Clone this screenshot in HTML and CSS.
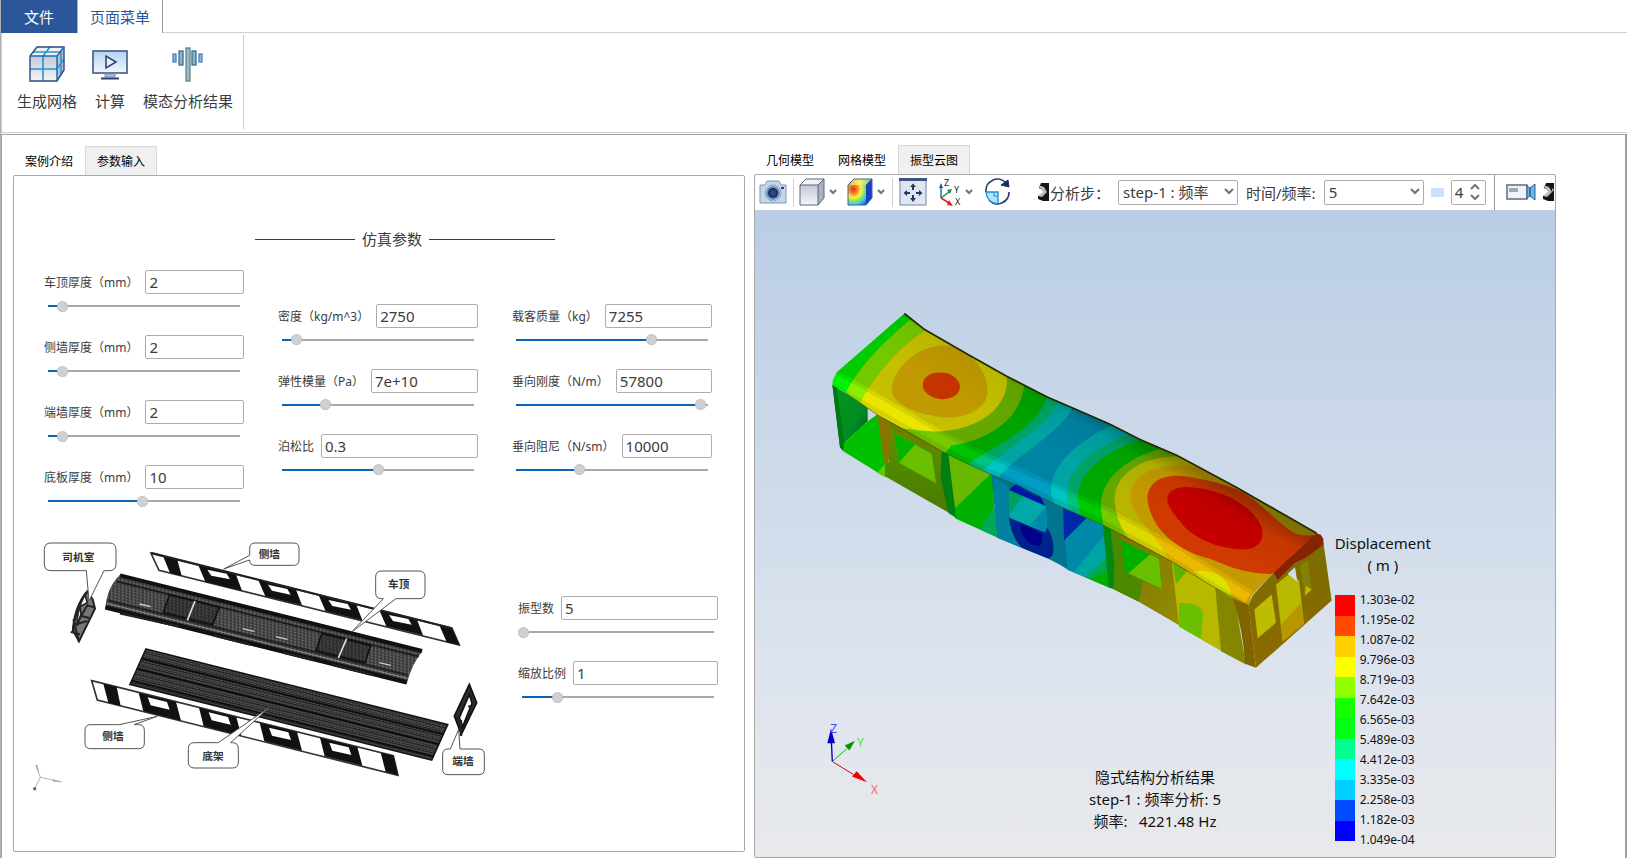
FILE: index.html
```
<!DOCTYPE html>
<html lang="zh-CN">
<head>
    <meta charset="UTF-8">
    <meta name="viewport" content="width=device-width, initial-scale=1.0">
    <title>模态分析</title>
    <link rel="stylesheet" href="styles.css">
</head>
<body>
    <header class="ribbon">
        <nav class="ribbon-tabs">
            <button type="button" class="file-tab">文件</button>
            <button type="button" class="menu-tab">页面菜单</button>
        </nav>
        <div class="ribbon-body">
            <div class="ribbon-group">
                <button type="button" class="ribbon-button">
                    <svg width="38" height="38" viewBox="0 0 38 38">
                        <defs>
                            <linearGradient id="face" x1="0" y1="0" x2="0" y2="1"><stop offset="0" stop-color="#c3c9d6"/><stop offset="1" stop-color="#f4f5f7"/></linearGradient>
                        </defs>
                        <path d="M2 11L9 2H36L29 11Z" fill="#eef2f7"/>
                        <path d="M2 11H29V36H2Z" fill="url(#face)"/>
                        <path d="M29 11L36 2V25L29 36Z" fill="#b5bfd0"/>
                        <path d="M15 36V11L22 2M2 24H29L36 14M5 7H33V30" fill="none" stroke="#2a93d3" stroke-width="1.6"/>
                        <path d="M2 11L9 2H36V25L29 36H2Z" fill="none" stroke="#2b4a80" stroke-width="1.4"/>
                        <path d="M2 11H29V36M29 11L36 2" fill="none" stroke="#1c6eb0" stroke-width="1.5"/>
                    </svg>
                    <span>生成网格</span>
                </button>
                <button type="button" class="ribbon-button">
                    <svg width="38" height="38" viewBox="0 0 38 38">
                        <defs>
                            <linearGradient id="screen" x1="0" y1="0" x2="0" y2="1"><stop offset="0" stop-color="#b4d3f3"/><stop offset="1" stop-color="#f1f6fb"/></linearGradient>
                        </defs>
                        <rect x="2" y="6" width="34" height="22" fill="url(#screen)" stroke="#3f5a86" stroke-width="1.6"/>
                        <path d="M15 11V23L25 17Z" fill="#e6effa" stroke="#27406f" stroke-width="1.5"/>
                        <path d="M14 29H24V32H14Z" fill="#b8c2d0" stroke="#7c8ba3"/>
                        <path d="M10 33.500H28" stroke="#27406f" stroke-width="2"/>
                    </svg>
                    <span>计算</span>
                </button>
                <button type="button" class="ribbon-button">
                    <svg width="38" height="38" viewBox="0 0 38 38">
                        <g stroke-width="1.300">
                            <rect x="4" y="9" width="3" height="8" fill="#8fb9dd" stroke="#4d83b5"/>
                            <rect x="10" y="6" width="4" height="14" fill="#8eb6c8" stroke="#3c6f92"/>
                            <rect x="17" y="3" width="4" height="33" fill="#9dbcc0" stroke="#5b8791"/>
                            <rect x="23" y="6" width="4" height="14" fill="#8eb6c8" stroke="#3c6f92"/>
                            <rect x="30" y="9" width="3" height="8" fill="#8fb9dd" stroke="#4d83b5"/>
                        </g>
                    </svg>
                    <span>模态分析结果</span>
                </button>
            </div>
        </div>
    </header>

    <main class="workspace">
        <section class="pane input-pane">
            <nav class="tabs">
                <button type="button" class="tab">案例介绍</button>
                <button type="button" class="tab active">参数输入</button>
            </nav>
            <div class="panel form-panel">
                <h1 class="form-title">仿真参数</h1>
                <div class="field-columns">
                    <div class="field-column">
                        <div class="field">
                            <div class="field-row"><label for="roof">车顶厚度（mm）</label><input class="text-input" id="roof" type="text" value="2"></div>
                            <input class="slider" type="range" aria-label="车顶厚度" value="7" style="--fill: 0.07">
                        </div>
                        <div class="field">
                            <div class="field-row"><label for="side">侧墙厚度（mm）</label><input class="text-input" id="side" type="text" value="2"></div>
                            <input class="slider" type="range" aria-label="侧墙厚度" value="7" style="--fill: 0.07">
                        </div>
                        <div class="field">
                            <div class="field-row"><label for="end">端墙厚度（mm）</label><input class="text-input" id="end" type="text" value="2"></div>
                            <input class="slider" type="range" aria-label="端墙厚度" value="7" style="--fill: 0.07">
                        </div>
                        <div class="field">
                            <div class="field-row"><label for="floor">底板厚度（mm）</label><input class="text-input" id="floor" type="text" value="10"></div>
                            <input class="slider" type="range" aria-label="底板厚度" value="49" style="--fill: 0.49">
                        </div>
                    </div>
                    <div class="field-column">
                        <div class="field">
                            <div class="field-row"><label for="density">密度（kg/m^3）</label><input class="text-input" id="density" type="text" value="2750"></div>
                            <input class="slider" type="range" aria-label="密度" value="7" style="--fill: 0.07">
                        </div>
                        <div class="field">
                            <div class="field-row"><label for="modulus">弹性模量（Pa）</label><input class="text-input" id="modulus" type="text" value="7e+10"></div>
                            <input class="slider" type="range" aria-label="弹性模量" value="22" style="--fill: 0.22">
                        </div>
                        <div class="field">
                            <div class="field-row"><label for="poisson">泊松比</label><input class="text-input" id="poisson" type="text" value="0.3"></div>
                            <input class="slider" type="range" aria-label="泊松比" value="50" style="--fill: 0.5">
                        </div>
                    </div>
                    <div class="field-column">
                        <div class="field">
                            <div class="field-row"><label for="mass">载客质量（kg）</label><input class="text-input" id="mass" type="text" value="7255"></div>
                            <input class="slider" type="range" aria-label="载客质量" value="71" style="--fill: 0.71">
                        </div>
                        <div class="field">
                            <div class="field-row"><label for="stiffness">垂向刚度（N/m）</label><input class="text-input" id="stiffness" type="text" value="57800"></div>
                            <input class="slider" type="range" aria-label="垂向刚度" value="97" style="--fill: 0.97">
                        </div>
                        <div class="field">
                            <div class="field-row"><label for="damping">垂向阻尼（N/sm）</label><input class="text-input" id="damping" type="text" value="10000"></div>
                            <input class="slider" type="range" aria-label="垂向阻尼" value="33" style="--fill: 0.33">
                        </div>
                    </div>
                </div>

                <div class="lower">
                    <!-- exploded view of the car body -->
                    <svg class="exploded" viewBox="90 50 1380 780">
                        <defs>
                            <pattern id="mesh" width="11" height="9" patternUnits="userSpaceOnUse" patternTransform="skewY(14)">
                                <rect width="11" height="9" fill="#343434"/>
                                <path d="M2 2H9M2 6H6" stroke="#8f8f8f" stroke-width="2"/>
                            </pattern>
                            <pattern id="ribs" width="40" height="14" patternUnits="userSpaceOnUse" patternTransform="skewY(14)">
                                <rect width="40" height="14" fill="#1c1c1c"/>
                                <path d="M0 3H40" stroke="#8c8c8c" stroke-width="2"/>
                                <path d="M0 9H40" stroke="#6c6c6c" stroke-width="3" stroke-dasharray="8 2"/>
                            </pattern>
                        </defs>

                        <!-- upper side wall -->
                        <path d="M453 102L1356 327L1378 377L477 153Z" fill="#fff" stroke="#333" stroke-width="5"/>
                        <g fill="#111">
                            <path d="M490 112L532 122L545 169L510 161Z"/>
                            <path d="M595 138L708 166L726 214L616 187ZM622 151L634 169L690 180L680 163Z" fill-rule="evenodd"/>
                            <path d="M775 183L888 211L906 258L796 231ZM804 196L816 214L872 226L862 209Z" fill-rule="evenodd"/>
                            <path d="M956 228L1069 256L1087 303L977 276ZM985 242L997 260L1053 271L1043 254Z" fill-rule="evenodd"/>
                            <path d="M1138 273L1251 301L1269 348L1159 321ZM1167 287L1179 305L1235 316L1225 299Z" fill-rule="evenodd"/>
                            <path d="M1318 318L1356 327L1378 377L1340 368Z"/>
                        </g>
                        <path d="M453 100L1356 327" fill="none" stroke="#222" stroke-width="6"/>

                        <!-- roof -->
                        <path d="M360 166L1268 394Q1235 435 1220 493L750 378L316 268Q320 205 360 166Z" fill="url(#mesh)"/>
                        <path d="M360 168L1266 395" stroke="#111" stroke-width="12" fill="none"/>
                        <path d="M350 186L1256 412" stroke="#1b1b1b" stroke-width="5" fill="none"/>
                        <path d="M316 264L1220 489" stroke="#111" stroke-width="13" fill="none"/>
                        <path d="M322 243L1225 468" stroke="#222" stroke-width="6" fill="none"/>
                        <path d="M320 252L1222 477" stroke="#aaa" stroke-width="2" fill="none"/>
                        <path d="M360 282L540 322M640 348L750 376M850 400L940 422M1000 437L1120 467" stroke="#222" stroke-width="7" fill="none"/>
                        <g fill="#1d1d1d" fill-opacity=".45" stroke="#111" stroke-width="5">
                            <path d="M508 226L658 263L638 316L490 280Z"/>
                            <path d="M966 342L1112 378L1095 430L948 394Z"/>
                        </g>
                        <path d="M585 245L562 303M1040 358L1015 416" stroke="#ddd" stroke-width="5"/>
                        <path d="M418 254L452 262M728 328L762 336M828 352L862 360M1138 430L1172 438" stroke="#ccc" stroke-width="4"/>

                        <!-- floor frame -->
                        <path d="M438 389L1343 616L1295 722L390 495Z" fill="url(#ribs)" stroke="#161616" stroke-width="5"/>
                        <path d="M425 418L1330 645M412 448L1317 675M396 484L1301 711" stroke="#0c0c0c" stroke-width="5"/>

                        <!-- lower side wall -->
                        <path d="M275 484L1180 709L1194 768L292 542Z" fill="#fff" stroke="#333" stroke-width="5"/>
                        <g fill="#111">
                            <path d="M310 493L350 503L362 560L325 550Z"/>
                            <path d="M416 520L528 548L543 604L430 576ZM443 534L452 558L509 571L501 548Z" fill-rule="evenodd"/>
                            <path d="M597 565L709 593L724 649L611 621ZM626 579L635 603L692 616L684 593Z" fill-rule="evenodd"/>
                            <path d="M779 610L891 638L906 694L793 666ZM807 625L816 649L873 662L865 639Z" fill-rule="evenodd"/>
                            <path d="M960 655L1072 683L1087 739L974 711ZM988 670L997 694L1054 707L1046 684Z" fill-rule="evenodd"/>
                            <path d="M1142 700L1180 709L1194 768L1157 757Z"/>
                        </g>

                        <!-- cab and end wall -->
                        <path d="M262 216Q225 260 220 335L237 366L285 268L278 240Z" fill="#777" stroke="#222" stroke-width="6"/>
                        <path d="M255 225Q228 275 232 320L243 285L240 262L262 250Z" fill="#eee" stroke="#222" stroke-width="5"/>
                        <path d="M262 216Q222 262 218 340M285 265L262 258L238 300M228 315L262 305M212 338L240 345M245 290L268 296M237 368L220 300" fill="none" stroke="#222" stroke-width="6"/>
                        <path d="M1408 495L1430 550L1384 645L1363 590ZM1408 525L1378 595L1388 622L1416 552Z" fill="#2b2b2b" fill-rule="evenodd" stroke="#111" stroke-width="5"/>
                        <path d="M1363 590L1383 605V650M1405 560L1416 565" stroke="#222" stroke-width="7" fill="none"/>

                        <!-- callouts -->
                        <g fill="#fff" stroke="#555" stroke-width="3" stroke-linejoin="round">
                            <path d="M153 71H328Q348 71 348 91V134Q348 154 328 154H312L267 245L259 154H153Q133 154 133 134V91Q133 71 153 71Z"/>
                            <path d="M765 71H881Q897 71 897 87V122Q897 138 881 138H765Q749 138 749 122L671 149L749 108V87Q749 71 765 71Z"/>
                            <path d="M1145 155H1257Q1275 155 1275 173V220Q1275 238 1257 238H1188L1055 338L1150 238H1145Q1127 238 1127 220V173Q1127 155 1145 155Z"/>
                            <path d="M272 616H358L472 591L402 616H416Q433 616 433 633V671Q433 688 416 688H272Q255 688 255 671V633Q255 616 272 616Z"/>
                            <path d="M583 670H655L808 564L692 670H697Q715 670 715 688V728Q715 746 697 746H583Q565 746 565 728V688Q565 670 583 670Z"/>
                            <path d="M1344 689H1351L1376 630L1380 689H1437Q1453 689 1453 705V750Q1453 766 1437 766H1344Q1328 766 1328 750V705Q1328 689 1344 689Z"/>
                        </g>
                        <g class="callout-text">
                            <text x="235" y="126">司机室</text>
                            <text x="808" y="117">侧墙</text>
                            <text x="1196" y="207">车顶</text>
                            <text x="339" y="663">侧墙</text>
                            <text x="639" y="722">底架</text>
                            <text x="1389" y="738">端墙</text>
                        </g>

                        <path d="M121 774L108 736M121 774L185 788M121 774L104 808" stroke="#888" stroke-width="2" fill="none"/>
                        <path d="M106 738L112 736L117 754L112 754ZM158 779L185 787L160 787Z" fill="#aaa"/>
                        <circle cx="104" cy="808" r="5" fill="#666"/>
                    </svg>
                    <div class="field-column">
                        <div class="field">
                            <div class="field-row"><label for="modes">振型数</label><input class="text-input" id="modes" type="text" value="5"></div>
                            <input class="slider" type="range" aria-label="振型数" value="0" style="--fill: 0">
                        </div>
                        <div class="field">
                            <div class="field-row"><label for="scale">缩放比例</label><input class="text-input" id="scale" type="text" value="1"></div>
                            <input class="slider" type="range" aria-label="缩放比例" value="18" style="--fill: 0.18">
                        </div>
                    </div>
                </div>
            </div>
        </section>

        <section class="pane result-pane">
            <nav class="tabs">
                <button type="button" class="tab">几何模型</button>
                <button type="button" class="tab">网格模型</button>
                <button type="button" class="tab active">振型云图</button>
            </nav>
            <div class="panel view-panel">
                <div class="toolbar">
                    <div class="tool-group camera-group">
                        <button type="button" class="tool" aria-label="截图">
                            <svg width="28" height="24" viewBox="0 0 28 24">
                                <path d="M1 5H6L8 1H20L22 5H27V23H1Z" fill="#c5d6ea" stroke="#7d97ba"/>
                                <circle cx="14" cy="13" r="8" fill="#e3edf7" stroke="#8aa2c0"/>
                                <circle cx="14" cy="13" r="6" fill="#17305e" stroke="#6c8bb5" stroke-width="2"/>
                                <circle cx="14" cy="13" r="3" fill="#274a80"/>
                                <rect x="22" y="7" width="3" height="2" fill="#27406f"/>
                            </svg>
                        </button>
                    </div>
                    <div class="tool-group shape-group">
                        <button type="button" class="tool drop" aria-label="显示模式">
                            <svg width="26" height="28" viewBox="0 0 26 28">
                                <path d="M1 7L7 1H25L19 7Z" fill="#f3f4f6"/><path d="M1 7H19V27H1Z" fill="url(#face)"/><path d="M19 7L25 1V20L19 27Z" fill="#aab1bf"/>
                                <path d="M1 7L7 1H25V20L19 27H1ZM1 7H19V27M19 7L25 1" fill="none" stroke="#59657d"/>
                            </svg>
                            <svg class="chevron" width="8" height="6" viewBox="0 0 8 6"><path d="M1 1L4 4L7 1"/></svg>
                        </button>
                        <button type="button" class="tool drop" aria-label="云图显示">
                            <svg width="26" height="28" viewBox="0 0 26 28">
                                <defs>
                                    <radialGradient id="rainbow" cx=".3" cy=".2" r=".95"><stop offset="0" stop-color="#e2331a"/><stop offset=".25" stop-color="#f58a20"/><stop offset=".45" stop-color="#fff04a"/><stop offset=".65" stop-color="#8de45a"/><stop offset=".82" stop-color="#3cc8f0"/><stop offset="1" stop-color="#1f6fe0"/></radialGradient>
                                    <linearGradient id="rainbow-top"><stop offset="0" stop-color="#f7a45a"/><stop offset=".5" stop-color="#f4f56a"/><stop offset="1" stop-color="#5fc9a0"/></linearGradient>
                                </defs>
                                <path d="M1 7L7 1H25L19 7Z" fill="url(#rainbow-top)"/><path d="M1 7H19V27H1Z" fill="url(#rainbow)"/><path d="M19 7L25 1V20L19 27Z" fill="#1840c0"/>
                                <path d="M1 7L7 1H25V20L19 27H1ZM19 7L25 1" fill="none" stroke="#45608a"/>
                            </svg>
                            <svg class="chevron" width="8" height="6" viewBox="0 0 8 6"><path d="M1 1L4 4L7 1"/></svg>
                        </button>
                    </div>
                    <div class="tool-group move-group">
                        <button type="button" class="tool" aria-label="适应窗口">
                            <svg width="28" height="28" viewBox="0 0 28 28">
                                <rect x="1" y="1" width="26" height="26" fill="#dfe6f0" stroke="#7084a4"/>
                                <path d="M0 1.500H28" stroke="#3c5580" stroke-width="3"/>
                                <path d="M14 8V12M14 17V21M7 15H11M17 15H21" stroke="#1f3864" stroke-width="2"/>
                                <path d="M11 9L14 5.500L17 9ZM11 20L14 24L17 20ZM8 12L4.500 15L8 18ZM20 12L23.500 15L20 18Z" fill="#1f3864"/>
                            </svg>
                        </button>
                        <button type="button" class="tool drop axis-tool" aria-label="视图方向">
                            <svg class="axis-icon" width="24" height="28" viewBox="0 0 24 28">
                                <path d="M4 20V8" stroke="#2d6ca8" stroke-width="1.500"/><path d="M2 10L4 5L6 10Z" fill="#2050a0"/>
                                <path d="M4 20L12 14" stroke="#2a8a4a" stroke-width="1.500"/><path d="M10 12L15 11L13 16Z" fill="#1f8a3c"/>
                                <path d="M4 20L12 25" stroke="#e02020" stroke-width="1.500"/><path d="M12 22L16 28L10 27Z" fill="#e02020"/>
                                <text class="axis-label" x="7" y="8">Z</text><text class="axis-label" x="17" y="15">Y</text><text class="axis-label" x="18" y="27">X</text>
                            </svg>
                            <svg class="chevron" width="8" height="6" viewBox="0 0 8 6"><path d="M1 1L4 4L7 1"/></svg>
                        </button>
                        <button type="button" class="tool" aria-label="旋转">
                            <svg width="28" height="28" viewBox="0 0 28 28">
                                <path d="M2 14A11.500 11.500 0 0 1 22 5M25 14A11.500 11.500 0 0 1 5 22" fill="none" stroke="#27406f" stroke-width="1.700"/>
                                <path d="M17 7L24 2L25 9Z" fill="#17305e" stroke="#17305e"/>
                                <path d="M2 14H14V26Q3 25 2 14Z" fill="#b5e2fa" stroke="#1d8dd0" stroke-width="1.300"/>
                                <path d="M10 14V18H14" fill="none" stroke="#1d8dd0"/>
                            </svg>
                        </button>
                    </div>
                    <svg class="handle" width="11" height="18" viewBox="0 0 11 18"><path d="M3 0H11V18H5L0 16V13L8 9L1 5Z" fill="#151515"/><path d="M0 2L6 4L9 9L4 14L0 13L5 9Z" fill="#bbb"/></svg>
                    <label class="bar-label" for="step">分析步：</label>
                    <span class="select-box step-box">
                        <select id="step"><option>step-1 : 频率</option></select>
                        <svg class="chevron" width="10" height="7" viewBox="0 0 10 7"><path d="M1 1L5 5L9 1"/></svg>
                    </span>
                    <label class="bar-label" for="freq">时间/频率:</label>
                    <span class="select-box freq-box">
                        <select id="freq"><option>5</option></select>
                        <svg class="chevron" width="10" height="7" viewBox="0 0 10 7"><path d="M1 1L5 5L9 1"/></svg>
                    </span>
                    <span class="mark"></span>
                    <span class="spin-box">
                        <input type="number" value="4" aria-label="帧">
                        <span class="spin-buttons">
                            <button type="button" aria-label="增加"><svg class="chevron" width="10" height="6" viewBox="0 0 10 6"><path d="M1 5L5 1L9 5"/></svg></button>
                            <button type="button" aria-label="减少"><svg class="chevron" width="10" height="6" viewBox="0 0 10 6"><path d="M1 1L5 5L9 1"/></svg></button>
                        </span>
                    </span>
                    <div class="record-group">
                        <button type="button" class="tool" aria-label="录制">
                            <svg width="30" height="18" viewBox="0 0 30 18">
                                <rect x="1" y="2" width="20" height="14" fill="#f0f2f6" stroke="#5b6b87" stroke-width="1.500"/><rect x="3" y="5" width="9" height="4" fill="#a0a8b8"/>
                                <path d="M21 3L24 5V13L21 15ZM24 5L29 1V17L24 13Z" fill="#6fb7e4" stroke="#2a5d94"/>
                            </svg>
                        </button>
                        <svg class="handle" width="11" height="18" viewBox="0 0 11 18"><path d="M3 0H11V18H5L0 16V13L8 9L1 5Z" fill="#151515"/><path d="M0 2L6 4L9 9L4 14L0 13L5 9ZM9 5V9L11 7Z" fill="#bbb"/></svg>
                    </div>
                </div>

                <div class="viewport">
                    <svg class="model" viewBox="-135 -240 2400 1938" preserveAspectRatio="xMidYMid meet">
                        <defs>
                            <clipPath id="roof-clip">
                                <path d="M313 69L330 80L375 116L430 148L500 188L560 222L620 256L680 288L740 317L800 343L900 386L930 400L1020 446L1130 493L1200 530L1310 590L1430 658L1550 728L1558 732L1420 847L1355 915L1345 945L1295 922L1245 892L1180 850L1110 810L990 745L910 704L780 648L650 582L575 553L510 525L430 485L330 425L235 375L180 337L135 305L97 283V272L110 245Z"/>
                            </clipPath>
                            <linearGradient id="shade" gradientUnits="userSpaceOnUse" x1="860" y1="350" x2="690" y2="640">
                                <stop offset="0" stop-color="#000" stop-opacity=".25"/><stop offset=".15" stop-color="#000" stop-opacity=".05"/><stop offset=".5" stop-color="#000" stop-opacity="0"/>
                            </linearGradient>
                            <linearGradient id="cab" x1="0" y1="0" x2="1" y2="1"><stop offset="0" stop-color="#009a1c"/><stop offset=".6" stop-color="#008c22"/><stop offset="1" stop-color="#005010"/></linearGradient>
                            <linearGradient id="panel" x1="0" y1="0" x2="0" y2="1"><stop offset="0" stop-color="#6c8c00"/><stop offset=".45" stop-color="#518a00"/><stop offset="1" stop-color="#4a7800"/></linearGradient>
                            <linearGradient id="panel-right" x1="0" y1="0" x2="1" y2="1"><stop offset="0" stop-color="#787000"/><stop offset="1" stop-color="#948c00"/></linearGradient>
                            <linearGradient id="end-face" x1="0" y1="0" x2="0" y2="1"><stop offset="0" stop-color="#7c6c00"/><stop offset="1" stop-color="#8c6a00"/></linearGradient>
                        </defs>

                        <g class="side">
                            <path d="M97 283L203 350V392L132 458L130 482L120 470Z" fill="url(#cab)"/>
                            <path d="M97 283L110 292L134 460L130 482L120 470Z" fill="#007a10"/>
                            <path d="M132 458L203 392L235 370L256 500V560L130 482Z" fill="#00c000"/>
                            <path d="M238 540L256 520V560L232 547Z" fill="#60c800"/>
                            <path d="M430 480L578 545L582 640L594 742L466 684Z" fill="#00b000"/>
                            <path d="M430 482L576 547L466 652Z" fill="#68b800"/>
                            <path d="M582 648L596 742L540 717Z" fill="#00a858"/>
                            <path d="M232 373L285 405L265 515H252Z" fill="#8a7400"/>
                            <path d="M270 395L432 480L427 540L452 670L255 557V515H266L272 425Z" fill="url(#panel)"/>
                            <path d="M235 370L430 476V498L285 420Z" fill="#6a8000"/>
                            <path d="M282 428L395 490L408 578L297 517Z" fill="#68c000"/>
                            <path d="M282 428L345 462L297 517Z" fill="#00b400"/>
                            <path d="M425 478L445 488L468 682L446 668L422 560Z" fill="#008010"/>

                            <path d="M574 545L792 642L804 838L780 823L745 805L592 742Z" fill="#007490"/>
                            <path d="M580 560L625 590V690Q640 750 665 772L592 742Z" fill="#0082a0"/>
                            <path d="M628 598Q648 570 680 578Q712 590 736 646Z" fill="#0018a8"/>
                            <path d="M650 580L690 582L715 612L700 612Z" fill="#0030cc"/>
                            <path d="M625 600L738 648L741 728L628 684Z" fill="#00a060"/>
                            <path d="M668 618L738 648L741 728L632 690L628 670Z" fill="#00a8a8"/>
                            <path d="M738 650L741 728L690 703Z" fill="#0088ac"/>
                            <path d="M628 682L735 726L742 712Q768 755 757 796L745 804L665 772Q630 730 628 682Z" fill="#00208c"/>
                            <path d="M660 700L725 728Q730 765 712 766Q668 760 660 700Z" fill="#000088"/>

                            <path d="M788 642L914 698L930 892L802 838Z" fill="#0088a8"/>
                            <path d="M789 645L862 680L792 750Z" fill="#0028a8"/>
                            <path d="M912 735L920 805L868 865L820 845Z" fill="#00a4a4"/>
                            <path d="M918 805L930 892L855 860Z" fill="#00a850"/>
                            <path d="M921 840L930 892L870 866Z" fill="#00b000"/>
                            <path d="M925 700L1118 802L1139 1005L1015 933L938 895L942 830Z" fill="url(#panel-right)"/>
                            <path d="M925 700L955 735Q965 860 1030 870L1015 933L938 895L942 825Z" fill="#4c8800"/>
                            <path d="M908 696L930 704L943 820L940 895L926 892Z" fill="#008a10"/>
                            <path d="M960 748L1077 805L1085 895L975 843Z" fill="#00b000"/>
                            <path d="M1050 792L1077 805L1085 895L985 848Z" fill="#68c000"/>

                            <path d="M1114 800L1247 882L1265 1082L1137 1008Z" fill="#b8b800"/>
                            <path d="M1117 808L1165 838L1128 880Z" fill="#60b400"/>
                            <path d="M1137 938Q1205 932 1209 975L1202 1045L1137 1008Z" fill="#68c000"/>
                            <path d="M1245 882L1302 915L1338 1122L1263 1082Z" fill="#848600"/>
                            <path d="M1295 912L1345 940L1368 1132L1335 1120Q1330 1020 1295 912Z" fill="#806400"/>
                            <path d="M1345 945L1358 915L1420 847L1433 870L1485 818L1515 805L1570 755L1595 930L1368 1132Z" fill="url(#end-face)"/>
                            <path d="M1363 957L1415 912L1428 997L1373 1043Z" fill="#bcbc00"/>
                            <path d="M1428 882L1470 848L1497 870L1512 1000L1448 1052Z" fill="#b8b800"/>
                            <path d="M1442 1005L1502 938L1512 1000L1449 1052Z" fill="#b89600"/>
                            <path d="M1463 850L1485 830L1492 874Z" fill="#d0dce9"/>
                            <path d="M1500 825L1523 810L1535 898L1515 915Z" fill="#808400"/>
                            <path d="M1517 885L1535 898L1515 915Z" fill="#c0b800"/>
                        </g>

                        <!-- contour bands on the roof -->
                        <g class="roof" clip-path="url(#roof-clip)">
                            <rect x="80" y="50" width="1500" height="920" fill="#0084a4"/>
                            <path d="M0 0H820V350C770 440 640 495 590 570H0Z" fill="#00a4a4"/>
                            <path d="M0 0H778V333C730 430 580 490 535 560H0Z" fill="#00a468"/>
                            <path d="M0 0H742V318C710 420 580 465 490 530H0Z" fill="#00a400"/>
                            <path d="M0 0H672V288C660 390 560 450 455 465L425 500H0Z" fill="#64a800"/>
                            <path d="M0 0H330V88C240 165 175 230 130 320H0Z" fill="#00cc00"/>
                            <path d="M330 88L375 119C290 175 220 260 180 340L130 320C175 230 240 165 330 88Z" fill="#74c800"/>
                            <path d="M375 119L450 100L620 258C630 345 540 423 400 423L280 412L180 337C220 260 290 175 375 119Z" fill="#c4c000"/>
                            <path d="M430 165C500 160 563 240 563 300C563 350 510 382 440 381C350 375 275 340 275 298C280 225 360 165 430 165Z" fill="#c09a00"/>
                            <ellipse cx="424" cy="286" rx="56" ry="40" transform="rotate(7 424 286)" fill="#c43400"/>

                            <path d="M1600 400H945C860 440 730 520 757 625L765 660V1000H1600Z" fill="#00a4a4"/>
                            <path d="M1600 432H985C860 480 785 550 803 640L820 680V1000H1600Z" fill="#00a468"/>
                            <path d="M1600 448H1020C900 490 820 560 835 640L850 700V1000H1600Z" fill="#00a800"/>
                            <path d="M1600 475H1080C960 510 890 580 905 670L915 740V1000H1600Z" fill="#64a800"/>
                            <path d="M1600 498H1130C1000 500 925 570 948 660C955 700 975 730 1000 770V1000H1600Z" fill="#b8b400"/>
                            <path d="M1600 533H1200C1100 510 985 540 992 625C1000 685 1070 730 1110 815L1130 1000H1600Z" fill="#c49a00"/>
                            <path d="M1042 625C1045 565 1100 550 1160 558C1260 575 1340 595 1400 655C1450 700 1480 740 1550 732L1590 740L1420 850C1350 852 1300 835 1230 805C1110 775 1050 700 1042 625Z" fill="#d03a00"/>
                            <path d="M1330 605C1400 650 1450 720 1500 733Q1530 738 1555 730L1430 655Z" fill="#a89800"/>
                            <path d="M1102 625C1102 600 1130 588 1170 590C1260 595 1350 640 1380 700C1400 740 1380 775 1330 777C1250 775 1180 740 1150 705C1125 675 1102 650 1102 625Z" fill="#c80000"/>
                            <path d="M1180 842Q1240 835 1270 865Q1295 890 1295 925L1240 900Z" fill="#b8bc00"/>
                            <rect x="80" y="50" width="1500" height="920" fill="url(#shade)"/>
                            <path class="glow wide" d="M97 265L180 310L330 397L430 455L575 525L790 622L910 675L1110 782L1245 865L1345 925"/>
                            <path class="glow" d="M97 262L180 307L330 394L430 452L575 522L790 619L910 672L1110 779L1245 862L1345 922"/>
                        </g>
                        <path d="M313 69L375 118L500 190L620 257L740 319L930 401L1020 447L1130 494L1310 591L1550 728" fill="none" stroke="#222a00" stroke-width="5"/>
                        <path d="M135 306L235 375L430 485L575 553L790 652L910 704L1110 810L1245 892L1345 945" fill="none" stroke="#3c5000" stroke-opacity=".6" stroke-width="3"/>
                        <path d="M1550 729L1562 732L1570 745V762L1515 805L1485 818L1433 870L1420 847Z" fill="#842400"/>

                        <g class="triad" transform="translate(-60 1230)">
                            <path d="M157 183L154 120" stroke="#0000c0" stroke-width="4"/><path d="M142 128L153 84L165 128Z" fill="#0000c8"/>
                            <path d="M157 183L200 145" stroke="#00c000" stroke-width="3"/><path d="M194 135L225 121L208 150Z" fill="#009a00"/>
                            <path d="M157 183L220 222" stroke="#d00000" stroke-width="3"/><path d="M230 212L261 245L216 228Z" fill="#ee0000"/>
                            <text x="151" y="96" fill="#4848ff">Z</text>
                            <text x="231" y="140" fill="#48e848">Y</text>
                            <text x="273" y="279" fill="#ff6060">X</text>
                        </g>
                    </svg>

                    <div class="caption">
                        <p>隐式结构分析结果</p>
                        <p>step-1 : 频率分析: 5</p>
                        <p>频率:&ensp; 4221.48 Hz</p>
                    </div>

                    <div class="legend">
                        <div class="legend-title">Displacement<br>( m )</div>
                        <div class="legend-scale">
                            <div class="legend-bar">
                                <i class="c1"></i><i class="c2"></i><i class="c3"></i><i class="c4"></i><i class="c5"></i><i class="c6"></i>
                                <i class="c7"></i><i class="c8"></i><i class="c9"></i><i class="c10"></i><i class="c11"></i><i class="c12"></i>
                            </div>
                            <ul class="legend-values">
                                <li>1.303e-02</li>
                                <li>1.195e-02</li>
                                <li>1.087e-02</li>
                                <li>9.796e-03</li>
                                <li>8.719e-03</li>
                                <li>7.642e-03</li>
                                <li>6.565e-03</li>
                                <li>5.489e-03</li>
                                <li>4.412e-03</li>
                                <li>3.335e-03</li>
                                <li>2.258e-03</li>
                                <li>1.182e-03</li>
                                <li>1.049e-04</li>
                            </ul>
                        </div>
                    </div>
                </div>
            </div>
        </section>
    </main>
</body>
</html>
```
FILE: styles.css
```
* {
    box-sizing: border-box;
}
body {
    margin: 0;
    min-height: 100vh;
    display: flex;
    flex-direction: column;
    border-left: 1px solid #b0b0b0;
    background-color: #fff;
    color: #3c3c3c;
    font-family: "Noto Sans", "Noto Sans CJK SC", sans-serif;
    font-size: 15px;
}
button, input, select {
    font: inherit;
    color: inherit;
    margin: 0;
}
button {
    border: 0;
    padding: 0;
    background: none;
}

/* Ribbon */
.ribbon-tabs {
    display: flex;
    height: 33px;
    border-bottom: 1px solid #d0d0d0;
}
.ribbon-tabs button {
    height: 33px;
    line-height: 32px;
}
.file-tab {
    width: 76px;
    background-color: #2b579a;
    color: #fff;
}
.menu-tab {
    width: 86px;
    background-color: #fff;
    border-left: 1px solid #b0b0b0;
    border-right: 1px solid #999;
    color: #2b579a;
}
.ribbon-body {
    display: flex;
    height: 100px;
    padding: 2px 0 3px;
    border-bottom: 1px solid #d0d0d0;
    border-left: 1px solid #d0d0d0;
}
.ribbon-group {
    display: flex;
    gap: 14px;
    padding: 10px 10px 0 15px;
    border-right: 1px solid #d0d0d0;
}
.ribbon-button {
    display: flex;
    flex-direction: column;
    align-items: center;
    gap: 8px;
    line-height: 20px;
}

/* Workspace */
.workspace {
    flex: 1;
    display: grid;
    grid-template-columns: 732fr 802fr;
    gap: 9px;
    margin-top: 1px;
    padding: 0 69px 0 11px;
    border: 2px solid #a0a0a0;
    border-width: 1px 2px 0 1px;
}
.pane {
    display: flex;
    flex-direction: column;
    min-width: 0;
}
.input-pane {
    padding: 11px 0 6px;
}
.result-pane {
    padding-top: 10px;
}
.tabs {
    display: flex;
    height: 29px;
}
.tab {
    width: 72px;
    padding-top: 2px;
    border: 1px solid transparent;
    border-bottom: 0;
    color: #000;
    font-size: 12px;
    line-height: 26px;
}
.tab.active {
    background-color: #f0f0f0;
    border-color: #d8d8d8;
}
.panel {
    flex: 1;
    border: 1px solid #a8a8a8;
    border-radius: 2px;
}

/* Parameter form */
.form-title {
    display: flex;
    align-items: center;
    gap: 7px;
    margin: 51px 0 19px;
    padding-left: 33%;
    font-size: 15px;
    font-weight: 400;
    line-height: 24px;
}
.form-title::before,
.form-title::after {
    content: "";
    width: 100px;
    height: 1px;
    background-color: #3c3c3c;
}
.form-title::after {
    width: 126px;
}
.field-columns {
    display: grid;
    grid-template-columns: repeat(3, 1fr);
    align-items: center;
    gap: 34px;
    padding: 0 32px 0 30px;
}
.field-column {
    display: flex;
    flex-direction: column;
    gap: 23px;
    min-width: 0;
}
.field-column + .field-column {
    padding-top: 2px;
}
.field-row {
    display: flex;
    align-items: center;
    gap: 7px;
}
.field-row label {
    font-size: 12px;
    white-space: nowrap;
}
.text-input {
    flex: 1;
    min-width: 0;
    height: 24px;
    padding: 0 3px;
    border: 1px solid #adadad;
    border-radius: 2px;
    background-color: #fff;
}
.slider {
    appearance: none;
    display: block;
    width: 100%;
    height: 12px;
    margin-top: 6px;
    background:
        linear-gradient(#0a64b8, #0a64b8) 4px 50% / calc((100% - 8px) * var(--fill)) 2px no-repeat,
        linear-gradient(#a8a8a8, #a8a8a8) 4px 50% / calc(100% - 8px) 2px no-repeat;
}
.slider::-webkit-slider-thumb {
    appearance: none;
    width: 11px;
    height: 11px;
    border: 1px dotted #b0b0b0;
    border-radius: 50%;
    background-color: #d0d0d0;
}
.lower {
    display: grid;
    grid-template-columns: 1fr 200px;
    margin-top: 29px;
    padding: 0 26px 0 16px;
}
.lower .field-column {
    padding-top: 60px;
}
.exploded {
    width: 100%;
    max-width: 460px;
}
.callout-text {
    font-family: "Noto Sans CJK SC", sans-serif;
    font-size: 32px;
    font-weight: 700;
    text-anchor: middle;
    fill: #333;
}

/* Result toolbar */
.view-panel {
    display: flex;
    flex-direction: column;
}
.toolbar {
    display: flex;
    align-items: center;
    height: 35px;
    padding-bottom: 1px;
    overflow: hidden;
    white-space: nowrap;
}
.tool-group {
    display: flex;
    align-items: center;
    height: 29px;
}
.camera-group {
    padding: 0 6px 0 4px;
    border-right: 1px solid #d0d0d0;
}
.shape-group {
    gap: 6px;
    padding: 0 3px 0 5px;
    border-right: 1px solid #d0d0d0;
}
.move-group {
    gap: 10px;
    padding: 0 26px 0 6px;
}
.tool {
    display: flex;
    align-items: center;
}
.drop {
    width: 42px;
    gap: 4px;
}
.axis-tool {
    width: 37px;
}
.axis-icon {
    overflow: visible;
}
.axis-label {
    font-size: 9px;
    fill: #222;
}
.chevron {
    fill: none;
    stroke: #5f7884;
    stroke-width: 2;
}
.handle {
    flex: none;
}
.bar-label {
    margin: 0 8px 0 1px;
}
.select-box {
    position: relative;
    display: block;
    margin-right: 7px;
}
.step-box {
    width: 120px;
}
.freq-box {
    width: 100px;
}
.select-box select {
    appearance: none;
    display: block;
    width: 100%;
    height: 25px;
    padding: 0 24px 0 4px;
    border: 1px solid #adadad;
    border-radius: 2px;
    background-color: #fff;
}
.select-box .chevron {
    position: absolute;
    right: 4px;
    top: 8px;
    pointer-events: none;
}
.mark {
    width: 13px;
    height: 9px;
    margin-right: 7px;
    background-color: #cce0fe;
}
.spin-box {
    display: flex;
    width: 35px;
    height: 25px;
    border: 1px solid #adadad;
    border-radius: 2px;
}
.spin-box input {
    appearance: textfield;
    width: 18px;
    padding: 0 0 0 3px;
    border: 0;
    background: none;
}
.spin-box input::-webkit-inner-spin-button {
    display: none;
}
.spin-buttons {
    display: flex;
    flex-direction: column;
    justify-content: space-evenly;
}
.spin-buttons button {
    display: flex;
}
.record-group {
    display: flex;
    align-items: center;
    gap: 7px;
    height: 35px;
    margin-left: 8px;
    padding-left: 11px;
    border-left: 1px solid #999;
}

/* 3D view */
.viewport {
    position: relative;
    flex: 1;
    background: linear-gradient(#b9cde5, #dfe5ee 75%, #e8e9eb);
}
.model {
    position: absolute;
    inset: 0;
    width: 100%;
    height: 100%;
}
.roof {
    isolation: isolate;
}
.glow {
    fill: none;
    stroke: #161616;
    stroke-width: 28;
    mix-blend-mode: color-dodge;
}
.glow.wide {
    stroke: #161616;
    stroke-width: 56;
}
.triad {
    font-size: 36px;
}
.caption {
    position: absolute;
    right: 334px;
    bottom: 25px;
    color: #111;
    line-height: 22px;
    text-align: center;
}
.caption p {
    margin: 0;
}
.legend {
    position: absolute;
    right: 124px;
    bottom: 7px;
    color: #111;
}
.legend-title {
    margin-bottom: 14px;
    line-height: 22px;
    text-align: center;
}
.legend-scale {
    display: flex;
    gap: 5px;
}
.legend-bar {
    display: grid;
    grid-auto-rows: 1fr;
    width: 20px;
    height: 246px;
    margin-top: 5px;
}
.legend-values {
    margin: 0;
    padding: 0;
    list-style: none;
    font-size: 12px;
    line-height: 20px;
}
.c1 { background-color: #ff0000; }
.c2 { background-color: #ff4a00; }
.c3 { background-color: #ffd000; }
.c4 { background-color: #fbff00; }
.c5 { background-color: #90ff00; }
.c6 { background-color: #18ff00; }
.c7 { background-color: #00ff14; }
.c8 { background-color: #00ff90; }
.c9 { background-color: #00ffff; }
.c10 { background-color: #00d0ff; }
.c11 { background-color: #004aff; }
.c12 { background-color: #0000ff; }
```
